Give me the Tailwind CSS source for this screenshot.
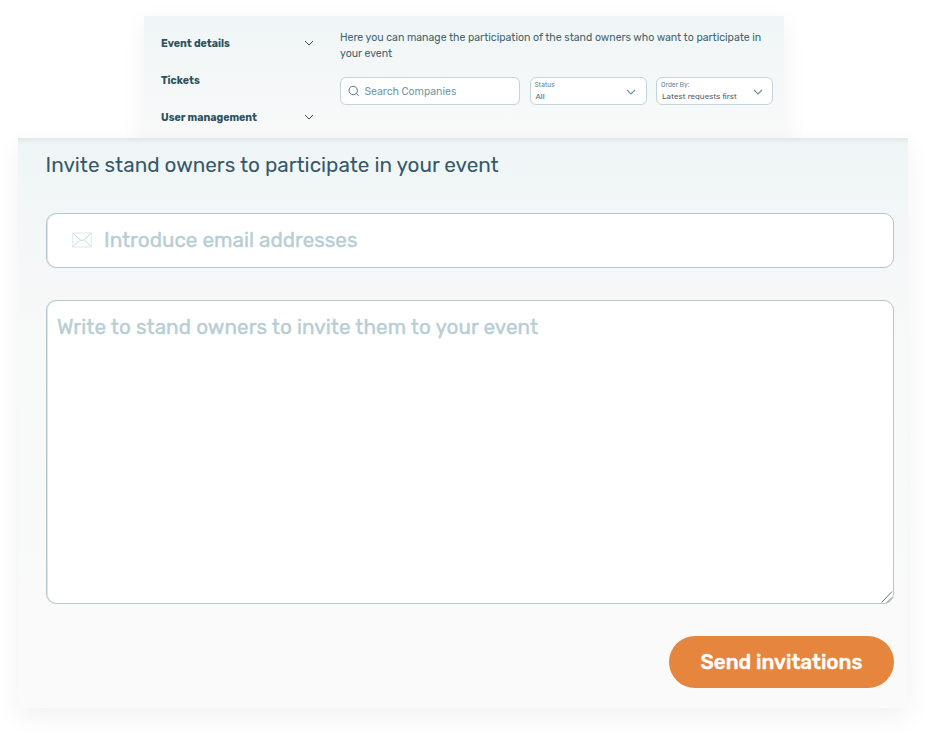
<!DOCTYPE html>
<html lang="en">
<head>
<meta charset="utf-8">
<title>Invite stand owners</title>
<script src="https://cdn.jsdelivr.net/npm/@tailwindcss/browser@4"></script>
</head>
<body class="h-[740px] w-[938px] overflow-hidden bg-white pt-4 font-['Rubik',Roboto,sans-serif] text-[#35596a]">
<section class="ml-[144px] flex h-[122px] w-[640px] bg-linear-to-b from-[#eff5f6] to-[#f9fafa] shadow-[0_8px_24px_rgba(0,0,0,0.06)]">
  <nav class="ml-[17px] flex w-[153px] flex-col pt-[18px] text-[10.56px] leading-[18px] font-bold text-[#2c515e]">
    <a class="flex h-[37px] items-start justify-between"><span class="pt-px">Event details</span>
      <svg class="mt-[5px] h-2 w-2.5" viewBox="0 0 10 8" fill="none" stroke="currentColor"><path d="M1 2l4 4 4-4"/></svg></a>
    <a class="flex h-[37px] items-start"><span class="pt-px">Tickets</span></a>
    <a class="flex h-[30px] items-start justify-between"><span class="pt-px">User management</span>
      <svg class="mt-[5px] h-2 w-2.5" viewBox="0 0 10 8" fill="none" stroke="currentColor"><path d="M1 2l4 4 4-4"/></svg></a>
  </nav>
  <div class="ml-[26px] w-[433px] pt-[14px]">
    <p class="text-[10.57px] leading-4 whitespace-nowrap text-[#44666f]">Here you can manage the participation of the stand owners who want to participate in<br>your event</p>
    <div class="mt-[15px] flex gap-[9.5px]">
      <div class="flex h-7 w-[180px] items-center rounded-[6px] border border-[#c2d5da] bg-white pl-[7px] text-[#7599a5]">
        <svg class="h-3 w-3" viewBox="0 0 12 12" fill="none" stroke="#50798a"><circle cx="5.2" cy="5.5" r="4.2"/><path d="M8.2 8.5l2.6 2.4"/></svg>
        <span class="ml-[4.5px] pt-px text-[10.56px] leading-4">Search Companies</span>
      </div>
      <div class="flex h-7 w-[117px] items-center justify-between rounded-[6px] border border-[#c2d5da] bg-white pr-[10px] pl-[5px]">
        <div class="pt-px"><div class="-ml-px text-[6.6px] leading-[9px] text-[#64899a]">Status</div><div class="pt-px text-[8px] leading-3 text-[#566368]">All</div></div>
        <svg class="mt-px h-2 w-2.5" viewBox="0 0 10 8" fill="none" stroke="#6e93a1" stroke-width="1.1"><path d="M1 2l4 4 4-4"/></svg>
      </div>
      <div class="flex h-7 w-[117px] items-center justify-between rounded-[6px] border border-[#c2d5da] bg-white pr-[9px] pl-[5px]">
        <div class="pt-px whitespace-nowrap"><div class="-ml-px text-[6.6px] leading-[9px] text-[#64899a]">Order By:</div><div class="pt-px text-[8px] leading-3 text-[#566368]">Latest requests first</div></div>
        <svg class="mt-px h-2 w-2.5" viewBox="0 0 10 8" fill="none" stroke="#6e93a1" stroke-width="1.1"><path d="M1 2l4 4 4-4"/></svg>
      </div>
    </div>
  </div>
</section>
<main class="relative ml-[18px] h-[570px] w-[890px] bg-linear-to-b from-[#eff5f6] via-[#f8f9f9] via-35% to-[#fafafa] px-7 pt-[11px] shadow-[0_8px_24px_rgba(0,0,0,0.06)]">
  <div class="absolute inset-x-0 top-0 h-1.5 bg-linear-to-b from-[#e2e8e8] to-transparent"></div>
  <h1 class="h-8 text-[20.7px] leading-8 whitespace-nowrap"><span class="-ml-[0.5px]">Invite stand owners to participate in your event</span></h1>
  <div class="mt-[31.5px] flex h-[55.5px] w-[848px] items-center rounded-[10px] border-[1.5px] border-[#b2c8ce] bg-white pl-[25px] text-[#b8ced4] shadow-[inset_1px_0_0_#d9e5e8]">
    <svg class="h-4 w-5" viewBox="0 0 20 16" fill="none" stroke="currentColor" stroke-width=".8"><rect x=".8" y="1" width="18.4" height="14" stroke="#d3e1e4"/><path d="M1.2 1.5l7 6.4q1.8 1.2 3.6 0l7-6.4M1.2 14.5l6.1-6.3M18.8 14.5l-6.1-6.3"/></svg>
    <span class="ml-3 text-[20.7px] [-webkit-text-stroke:0.4px_#b8ced4]">Introduce email addresses</span>
  </div>
  <div class="relative mt-[31.5px] h-[304.5px] w-[848px] rounded-[10px] border-[1.5px] border-[#b2c8ce] bg-white pt-[10px] pl-[10px] text-[20.7px] leading-8 text-[#b8ced4] shadow-[inset_1px_0_0_#d9e5e8]">
    <span class="tracking-[0.045px] [-webkit-text-stroke:0.4px_#b8ced4]">Write to stand owners to invite them to your event</span>
    <svg class="absolute right-0 bottom-0 h-3 w-3" viewBox="0 0 12 12" fill="none" stroke="#6f7375"><path d="M.5 11.5l10.5-11M6 11.5l5-5"/></svg>
  </div>
  <button class="mt-8 ml-[623px] flex h-[52px] w-[225px] items-center justify-center rounded-full bg-[#e5853e] pt-px text-[20.7px] font-medium text-white"><span class="[-webkit-text-stroke:0.4px_white]">Send invitations</span></button>
</main>
</body>
</html>
